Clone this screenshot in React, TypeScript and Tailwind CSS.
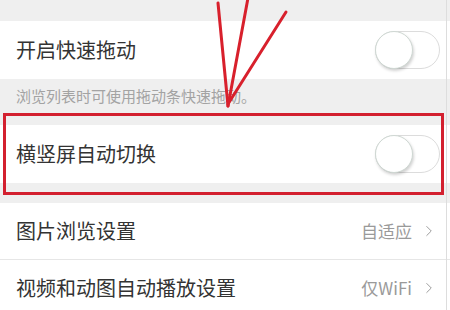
import { ChevronRight } from "lucide-react";

const font = { fontFamily: '"Noto Sans CJK SC", "Noto Sans", sans-serif' };

const Toggle = () => (
    <div className="relative w-[65px] h-[38px] rounded-full border border-[#dcdcdc] bg-white">
        <div className="absolute left-[-1px] top-[-1px] w-[38px] h-[38px] rounded-full bg-white border border-[#cfd8d3] shadow-[1px_2px_3px_rgba(0,0,0,0.18)]" />
    </div>
);

const SwitchRow = ({ title }: { title: string }) => (
    <div className="flex items-center justify-between h-[58px] bg-white pl-4 pr-[10px]">
        <span className="text-[20px] text-[#333333]">{title}</span>
        <Toggle />
    </div>
);

const LinkRow = ({ title, value }: { title: string; value: string }) => (
    <div className="flex items-center justify-between h-[56px] bg-white pl-4 pr-[12px]">
        <span className="text-[20px] text-[#333333]">{title}</span>
        <div className="flex items-center gap-[8px] text-[#9a9a9a]">
            <span className="text-[17px]">{value}</span>
            <ChevronRight size={18} strokeWidth={1.3} />
        </div>
    </div>
);

export default function App() {
    return (
        <div className="relative w-[450px] h-[310px] overflow-hidden bg-[#efefef]" style={font}>
            <div className="h-[21px]" />
            <SwitchRow title="开启快速拖动" />
            <div className="h-[34px] flex items-center pl-4 text-[15px] text-[#a3a3a3]">
                浏览列表时可使用拖动条快速拖动。
            </div>
            <div className="h-[12px]" />
            <SwitchRow title="横竖屏自动切换" />
            <div className="h-[20px]" />
            <LinkRow title="图片浏览设置" value="自适应" />
            <div className="h-px bg-[#e6e6e6]" />
            <LinkRow title="视频和动图自动播放设置" value="仅WiFi" />

            {/* 右端の縦線 */}
            <div className="absolute top-0 right-[3px] w-px h-full bg-[#dddddd]" />

            {/* 赤い注釈 */}
            <div className="absolute left-[3px] top-[113px] w-[441px] h-[82px] border-[3px] border-[#d3202f]" />
            <svg className="absolute inset-0" width="450" height="310">
                <g stroke="#d8202c" strokeWidth="3" strokeLinecap="round" fill="none">
                    <line x1="218" y1="3" x2="228" y2="106" />
                    <line x1="248" y1="-2" x2="228" y2="106" />
                    <line x1="286" y1="12" x2="228" y2="104" />
                </g>
            </svg>
        </div>
    );
}
